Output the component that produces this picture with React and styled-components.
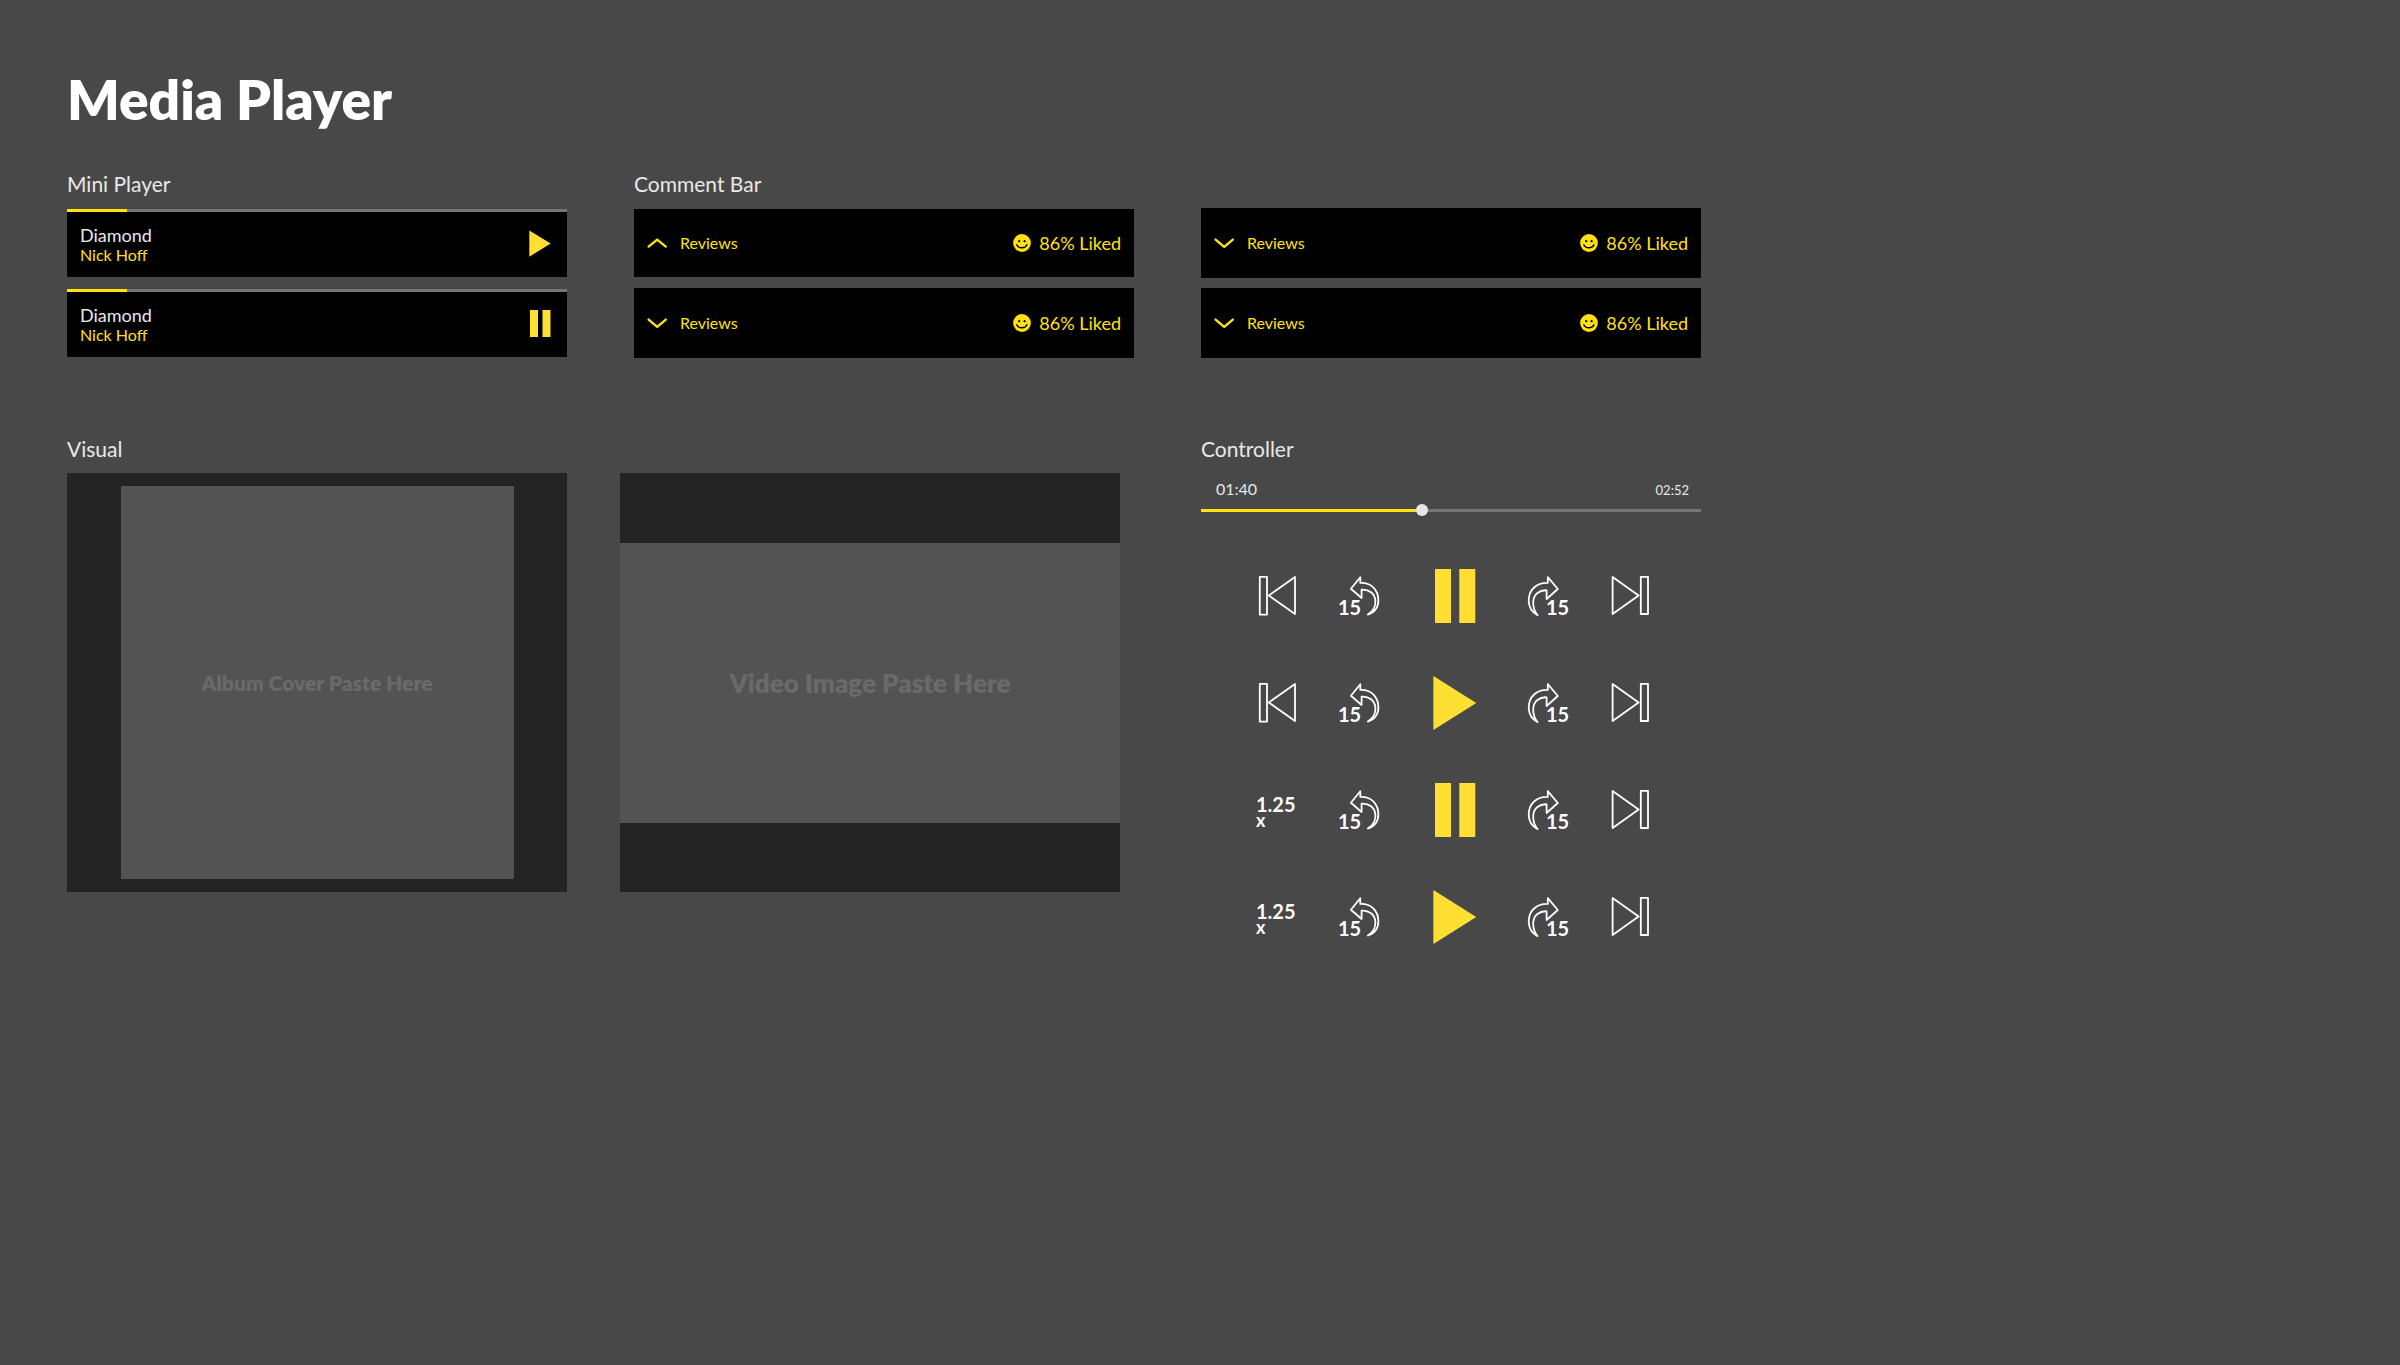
import React, { useState } from "react";
import styled, { createGlobalStyle, ThemeProvider } from "styled-components";

const theme = {
  page: "#484848",
  bar: "#000000",
  frame: "#242424",
  picture: "#535353",
  hint: "#6a6a6a",
  track: "#757575",
  yellow: "#ffe20f",
  icon: "#ffdf32",
  light: "#e8e8e8",
};

const GlobalStyle = createGlobalStyle`
  *, *::before, *::after { box-sizing: border-box; }
  body {
    margin: 0;
    background: ${theme.page};
    color: #ffffff;
    font-family: Lato, "Open Sans", sans-serif;
  }
  button {
    padding: 0;
    border: 0;
    background: none;
    color: inherit;
    font: inherit;
    cursor: pointer;
  }
  h1, h2, p { margin: 0; }
  svg { display: block; overflow: visible; }
`;

const Page = styled.main`
  min-height: 100vh;
  padding: 65px 67px;
`;

const Title = styled.h1`
  margin-bottom: 38px;
  font-size: 55px;
  font-weight: 800;
  line-height: 68px;
`;

const Board = styled.div`
  display: grid;
  grid-template-columns: repeat(3, minmax(0, 500px));
  gap: 78px 67px;
`;

const Section = styled.section`
  display: flex;
  flex-direction: column;
  gap: 11px;
  grid-column: span ${(p) => p.$span || 1};
`;

const Heading = styled.h2`
  color: ${(p) => p.theme.light};
  font-size: 21px;
  font-weight: 400;
  line-height: 26px;
`;

const BarList = styled.div`
  display: grid;
  grid-auto-rows: 70px;
  align-items: center;
  gap: 10px;
`;

const CommentColumns = styled.div`
  display: grid;
  grid-template-columns: repeat(2, minmax(0, 500px));
  gap: 67px;
`;

const MiniBar = styled.article`
  display: flex;
  flex-direction: column;
  height: 68px;
  background: ${(p) => p.theme.bar};
`;

const Progress = styled.progress`
  display: block;
  width: 100%;
  height: 3px;
  border: 0;
  appearance: none;
  &::-webkit-progress-bar { background: ${(p) => p.theme.track}; }
  &::-webkit-progress-value { background: ${(p) => p.theme.yellow}; }
`;

const MiniBody = styled.div`
  display: flex;
  flex: 1;
  align-items: center;
  justify-content: space-between;
  padding: 0 16px 0 13px;
`;

const Track = styled.p`
  color: ${(p) => p.theme.light};
  font-size: 18px;
  line-height: 20px;
`;

const Artist = styled.p`
  color: ${(p) => p.theme.yellow};
  font-size: 16px;
  line-height: 20px;
`;

const CommentRow = styled.article`
  display: flex;
  align-items: center;
  justify-content: space-between;
  height: ${(p) => (p.$open ? 68 : 70)}px;
  padding: 0 13px;
  background: ${(p) => p.theme.bar};
  color: ${(p) => p.theme.yellow};
`;

const ReviewsToggle = styled.button`
  display: flex;
  align-items: center;
  gap: 13px;
  font-size: 16px;
  line-height: 20px;
`;

const Liked = styled.span`
  display: flex;
  align-items: center;
  gap: 8px;
  font-size: 18px;
  line-height: 20px;
`;

const Visuals = styled.div`
  display: grid;
  grid-template-columns: repeat(2, minmax(0, 500px));
  gap: 53px;
`;

const Frame = styled.div`
  display: flex;
  align-items: center;
  justify-content: center;
  height: 419px;
  background: ${(p) => p.theme.frame};
`;

const Picture = styled.div`
  display: flex;
  align-items: center;
  justify-content: center;
  width: ${(p) => (p.$wide ? "100%" : "393px")};
  height: ${(p) => (p.$wide ? 280 : 393)}px;
  background: ${(p) => p.theme.picture};
  color: ${(p) => p.theme.hint};
  font-size: ${(p) => (p.$wide ? 26 : 21)}px;
  font-weight: 800;
`;

const Player = styled.div`
  display: flex;
  flex-direction: column;
  gap: 53px;
  padding-top: 6px;
`;

const Timeline = styled.div`
  display: flex;
  flex-direction: column;
  gap: 4px;
`;

const Times = styled.div`
  display: flex;
  align-items: baseline;
  justify-content: space-between;
  padding: 0 12px 0 15px;
  color: ${(p) => p.theme.light};
  line-height: 20px;
`;

const Elapsed = styled.span`
  font-size: 16px;
`;

const Duration = styled.span`
  font-size: 13px;
`;

const Seek = styled.input`
  display: block;
  width: 100%;
  height: 12px;
  margin: 0;
  appearance: none;
  background: none;
  &::-webkit-slider-runnable-track {
    height: 3px;
    background: linear-gradient(
      to right,
      ${(p) => p.theme.yellow} var(--played),
      ${(p) => p.theme.track} var(--played)
    );
  }
  &::-webkit-slider-thumb {
    appearance: none;
    width: 12px;
    height: 12px;
    margin-top: -5px;
    border-radius: 50%;
    background: #e6e6e8;
  }
`;

const Controls = styled.div`
  display: flex;
  align-items: center;
  justify-content: space-between;
  height: 54px;
  padding: 0 47px 0 53px;
`;

const Speed = styled.button`
  display: flex;
  flex-direction: column;
  align-items: flex-start;
  width: 42px;
  padding: 3px 0 0 2px;
  font-weight: 700;
  line-height: 16px;
`;

const Rate = styled.span`
  font-size: 20px;
`;

const RateUnit = styled.span`
  font-size: 18px;
`;

const SkipLabel = styled.text`
  fill: #ffffff;
  stroke: none;
  font-size: 20px;
  font-weight: 700;
`;

const Outline = styled.svg`
  fill: none;
  stroke: #ffffff;
  stroke-width: 1.8;
  stroke-linejoin: round;
`;

const Solid = styled.svg`
  fill: ${(p) => p.theme.icon};
`;

const SmallPlay = () => (
  <Solid width="22" height="30" viewBox="0 0 22 30">
    <path d="M0.3 0.5 L21.7 13.5 L0.3 26.7 Z" />
  </Solid>
);

const SmallPause = () => (
  <Solid width="22" height="30" viewBox="0 0 22 30">
    <path d="M1 0h8v27H1zM13.5 0h8v27h-8z" />
  </Solid>
);

const BigPlay = () => (
  <Solid width="64" height="54" viewBox="0 0 64 54">
    <path d="M11.4 0 L54.3 27 L11.4 54 Z" />
  </Solid>
);

const BigPause = () => (
  <Solid width="64" height="54" viewBox="0 0 64 54">
    <path d="M13 0h16v54H13zM37.3 0h16v54h-16z" />
  </Solid>
);

const PreviousIcon = () => (
  <Outline width="42" height="54" viewBox="0 0 42 54">
    <path d="M5.8 7.8h7.2v37.8H5.8zM41 8v37L14.8 26.5z" />
  </Outline>
);

const NextIcon = () => (
  <Outline width="42" height="54" viewBox="0 0 42 54">
    <path d="M28.8 7.8h7.2v37.2h-7.2zM0.6 8v37L26.6 26.6z" />
  </Outline>
);

const RewindIcon = () => (
  <Outline width="42" height="54" viewBox="0 0 42 54">
    <path d="M22.3 8.2L12.9 19.8L23.6 29V20.6C31 20 36.8 24.6 37.4 31.5C37.8 37.6 34.5 43 29.8 45.6C36.6 44 40.5 38 40.4 31C40.2 20.5 33 13.4 22.3 13.9Z" />
    <SkipLabel x="0" y="46">15</SkipLabel>
  </Outline>
);

const ForwardIcon = () => (
  <Outline width="42" height="54" viewBox="0 0 42 54">
    <path d="M19.8 8.2L29.8 20L18.6 30V21.3C11.5 20.8 5.8 25.5 5.2 32.3C4.9 38 6.6 42.8 9.6 46.2C3.8 43 0.7 38 0.7 31.5C0.9 20.5 8.5 13.6 19.8 13.9Z" />
    <SkipLabel x="18" y="46">15</SkipLabel>
  </Outline>
);

const Chevron = ({ up }) => (
  <svg width="20" height="12" viewBox="0 0 20 12" fill="none" stroke="currentColor" strokeWidth="2.4" strokeLinecap="round" strokeLinejoin="round">
    <path d={up ? "M1.6 9.6L10.2 2.6L18.8 9.6" : "M1.6 2.6L10.2 9.8L18.8 2.6"} />
  </svg>
);

const Smiley = () => (
  <svg width="18" height="20" viewBox="0 0 18 20">
    <circle cx="9" cy="10" r="8.9" fill="currentColor" />
    <circle cx="6.2" cy="8.2" r="1.1" fill="#000" />
    <circle cx="11.6" cy="8.2" r="1.1" fill="#000" />
    <path d="M3.8 11.8C5.4 15.8 12.4 15.8 14 11.8" fill="none" stroke="#000" strokeWidth="1.4" strokeLinecap="round" />
  </svg>
);

function MiniPlayer({ playing }) {
  return (
    <MiniBar>
      <Progress value={12} max={100} aria-label="Track progress" />
      <MiniBody>
        <div>
          <Track>Diamond</Track>
          <Artist>Nick Hoff</Artist>
        </div>
        <button aria-label={playing ? "Pause" : "Play"}>
          {playing ? <SmallPause /> : <SmallPlay />}
        </button>
      </MiniBody>
    </MiniBar>
  );
}

function CommentBar({ open }) {
  return (
    <CommentRow $open={open}>
      <ReviewsToggle aria-expanded={!open}>
        <Chevron up={open} />
        Reviews
      </ReviewsToggle>
      <Liked>
        <Smiley />
        86% Liked
      </Liked>
    </CommentRow>
  );
}

function SeekBar() {
  const [value, setValue] = useState(44);
  return (
    <Timeline>
      <Times>
        <Elapsed>01:40</Elapsed>
        <Duration>02:52</Duration>
      </Times>
      <Seek
        type="range"
        min="0"
        max="100"
        aria-label="Seek"
        value={value}
        onChange={(e) => setValue(Number(e.target.value))}
        style={{ "--played": `${value}%` }}
      />
    </Timeline>
  );
}

function ControlRow({ playing, speed }) {
  return (
    <Controls>
      {speed ? (
        <Speed aria-label="Playback speed 1.25x">
          <Rate>1.25</Rate>
          <RateUnit>x</RateUnit>
        </Speed>
      ) : (
        <button aria-label="Previous"><PreviousIcon /></button>
      )}
      <button aria-label="Back 15 seconds"><RewindIcon /></button>
      <button aria-label={playing ? "Pause" : "Play"}>
        {playing ? <BigPause /> : <BigPlay />}
      </button>
      <button aria-label="Forward 15 seconds"><ForwardIcon /></button>
      <button aria-label="Next"><NextIcon /></button>
    </Controls>
  );
}

export default function App() {
  return (
    <ThemeProvider theme={theme}>
      <GlobalStyle />
      <Page>
        <Title>Media Player</Title>
        <Board>
          <Section>
            <Heading>Mini Player</Heading>
            <BarList>
              <MiniPlayer />
              <MiniPlayer playing />
            </BarList>
          </Section>
          <Section $span={2}>
            <Heading>Comment Bar</Heading>
            <CommentColumns>
              <BarList>
                <CommentBar open />
                <CommentBar />
              </BarList>
              <BarList>
                <CommentBar />
                <CommentBar />
              </BarList>
            </CommentColumns>
          </Section>
          <Section $span={2}>
            <Heading>Visual</Heading>
            <Visuals>
              <Frame>
                <Picture>Album Cover Paste Here</Picture>
              </Frame>
              <Frame>
                <Picture $wide>Video Image Paste Here</Picture>
              </Frame>
            </Visuals>
          </Section>
          <Section>
            <Heading>Controller</Heading>
            <Player>
              <SeekBar />
              <ControlRow playing />
              <ControlRow />
              <ControlRow playing speed />
              <ControlRow speed />
            </Player>
          </Section>
        </Board>
      </Page>
    </ThemeProvider>
  );
}
